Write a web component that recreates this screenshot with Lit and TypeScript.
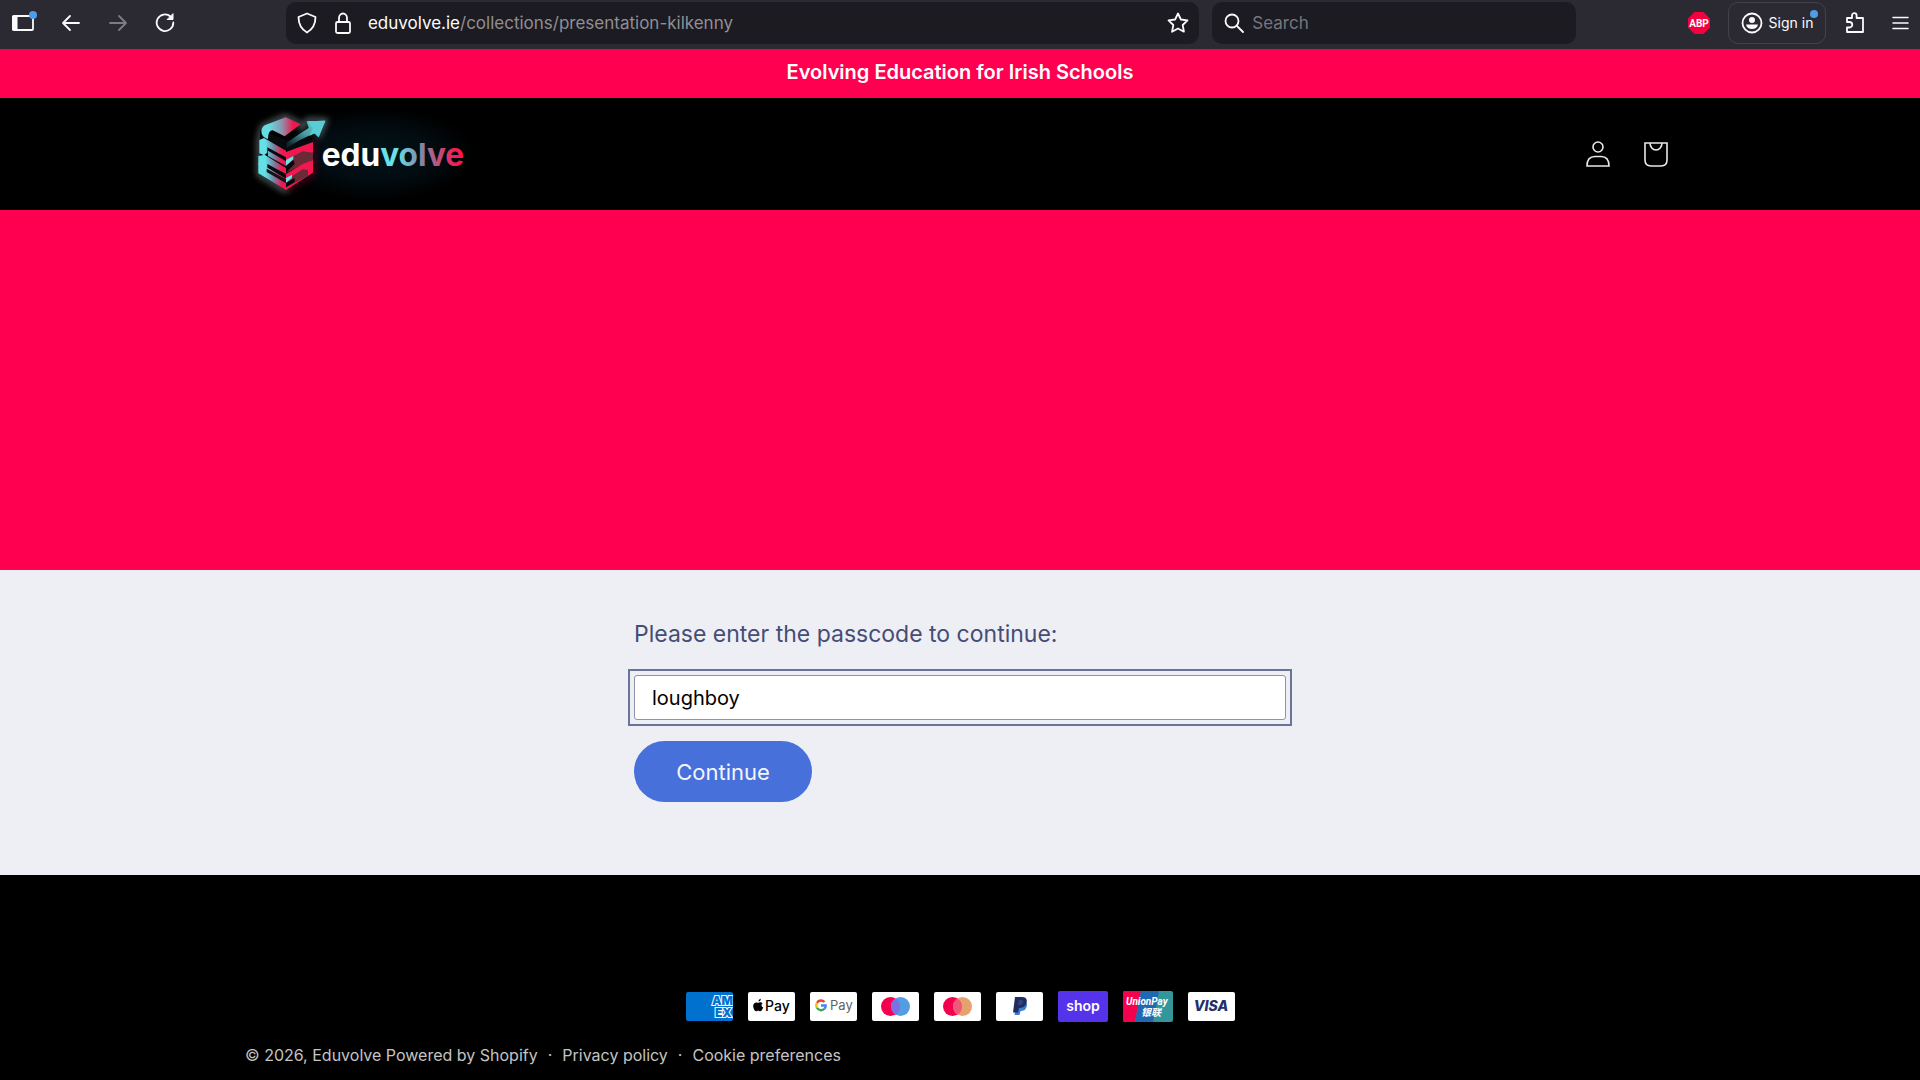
import { LitElement, html, svg, css } from "lit";
import { customElement, state } from "lit/decorators.js";

@customElement("browser-toolbar")
class BrowserToolbar extends LitElement {
  static styles = css`
    :host {
      display: block;
      background: #2b2a33;
      color: #fbfbfe;
      font-family: Inter, "Liberation Sans", sans-serif;
      font-size: 17px;
    }
    .bar {
      display: flex;
      align-items: center;
      height: 45px;
      padding-bottom: 4px;
    }
    button {
      display: flex;
      align-items: center;
      justify-content: center;
      flex: none;
      width: 47px;
      height: 42px;
      padding: 0;
      border: 0;
      background: none;
      color: inherit;
      font: inherit;
    }
    .muted {
      color: #7d7c83;
    }
    svg {
      display: block;
      flex: none;
      fill: none;
      stroke: currentColor;
      stroke-width: 1.8;
      stroke-linecap: round;
      stroke-linejoin: round;
    }
    .spring {
      flex: 1 1 98px;
    }
    .field {
      display: flex;
      align-items: center;
      box-sizing: border-box;
      height: 42px;
      border-radius: 10px;
      background: #1c1b22;
    }
    .address {
      flex: 10 1 914px;
      gap: 14px;
      padding: 0 10px;
    }
    .search {
      flex: 4 1 364px;
      gap: 8px;
      margin-left: 13px;
      padding: 0 12px;
    }
    .url {
      flex: 1;
      min-width: 0;
      color: #8f8f94;
      white-space: nowrap;
    }
    .host {
      color: #fbfbfe;
    }
    input {
      flex: 1;
      min-width: 0;
      padding: 0;
      border: 0;
      outline: 0;
      background: none;
      color: #fbfbfe;
      font: inherit;
    }
    input::placeholder {
      color: #77767c;
      opacity: 1;
    }
    .mini {
      width: 22px;
    }
    .left {
      display: flex;
      flex: none;
      width: 188px;
    }
    .signin {
      width: 98px;
      gap: 6px;
      box-sizing: border-box;
      border: 1px solid #43424b;
      border-radius: 10px;
      margin: 0 4px;
      position: relative;
      font-size: 14px;
    }
    .dot {
      position: absolute;
      top: 7px;
      right: 7px;
      width: 8px;
      height: 8px;
      border-radius: 50%;
      background: #4f9de8;
    }
    .wide {
      width: 50px;
    }
    .menu {
      width: 40px;
    }
  `;

  render() {
    return html`
      <header class="bar">
        <nav class="left" aria-label="Navigation">
          <button aria-label="Sidebar">
            <svg width="26" height="24" viewBox="0 0 26 24">
              <rect x="2" y="5" width="20" height="14" rx="1" />
              <path d="M2 5h4v14H2z" fill="currentColor" stroke-width="1" />
              <circle cx="22" cy="4" r="4" fill="#4f9de8" stroke="none" />
            </svg>
          </button>
          <button aria-label="Back">
            <svg width="20" height="18" viewBox="0 0 20 18"><path d="M18 9H2M9 2 2 9l7 7" /></svg>
          </button>
          <button class="muted" aria-label="Forward">
            <svg width="20" height="18" viewBox="0 0 20 18"><path d="M2 9h16M11 2l7 7-7 7" /></svg>
          </button>
          <button aria-label="Reload">
            <svg width="20" height="20" viewBox="0 0 20 20">
              <path d="M15.500 3.500A8.300 8.300 0 1 0 18.300 9.500" />
              <path d="M18 1v5.500h-5.500z" fill="currentColor" stroke-width="1" />
            </svg>
          </button>
        </nav>
        <span class="spring"></span>
        <div class="field address">
          <button class="mini" aria-label="Tracking protection">
            <svg width="20" height="22" viewBox="0 0 20 22">
              <path d="M10 1.500 18.500 5c0 7-2.500 12-8.500 15.500C4 17 1.500 12 1.500 5z" />
            </svg>
          </button>
          <button class="mini" aria-label="Connection secure">
            <svg width="18" height="22" viewBox="0 0 18 22">
              <rect x="2" y="10" width="14" height="11" rx="1.500" />
              <path d="M5 10V6a4 4.500 0 0 1 8 0v4" />
            </svg>
          </button>
          <span class="url"><span class="host">eduvolve.ie</span>/collections/presentation-kilkenny</span>
          <button class="mini" aria-label="Bookmark this page">
            <svg width="22" height="22" viewBox="0 0 22 22">
              <path d="m11 1.500 2.900 6 6.600.9-4.800 4.600 1.200 6.700-5.900-3.200-5.900 3.200 1.200-6.700L1.500 8.400l6.600-.9z" />
            </svg>
          </button>
        </div>
        <label class="field search">
          <svg width="20" height="20" viewBox="0 0 20 20"><circle cx="8" cy="8" r="6.500" /><path d="m13 13 6 6" /></svg>
          <input type="search" placeholder="Search" aria-label="Search" />
        </label>
        <span class="spring"></span>
        <button class="wide" aria-label="Adblock Plus">
          <svg width="22" height="22" viewBox="0 0 22 22">
            <path d="M6.500 0h9L22 6.500v9L15.500 22h-9L0 15.500v-9z" fill="#f5003f" stroke="none" />
            <text x="11" y="14.500" text-anchor="middle" font-size="10" font-weight="700" font-family="Roboto" fill="#fff" stroke="none">ABP</text>
          </svg>
        </button>
        <button class="signin">
          <svg width="22" height="22" viewBox="0 0 22 22">
            <circle cx="11" cy="11" r="9.500" />
            <circle cx="11" cy="8" r="3" fill="currentColor" stroke="none" />
            <path d="M5 12.500h12c-.5 3-3 4.500-6 4.500s-5.500-1.500-6-4.500z" fill="currentColor" stroke="none" />
          </svg>
          Sign in
          <i class="dot"></i>
        </button>
        <button class="wide" aria-label="Extensions">
          <svg width="20" height="22" viewBox="0 0 20 22">
            <path d="M2 20v-4.500h2.500a2.500 2.500 0 0 0 0-5.500H2V6h5V3.500a2.300 2.300 0 0 1 4.600 0V6H18v14z" />
          </svg>
        </button>
        <button class="menu" aria-label="Menu">
          <svg width="17" height="14" viewBox="0 0 17 14"><path d="M1 1.500h15M1 7h15M1 12.500h15" stroke-width="1.500" /></svg>
        </button>
      </header>
    `;
  }
}

@customElement("brand-logo")
class BrandLogo extends LitElement {
  static styles = css`
    :host {
      display: block;
    }
    svg {
      display: block;
    }
    text {
      font-family: Inter, "Open Sans", sans-serif;
      font-weight: 700;
      font-size: 95px;
    }
  `;

  render() {
    return html`
      <svg width="230" height="92" viewBox="15 24 690 276" role="img" aria-label="eduvolve">
        <defs>
          <radialGradient id="back">
            <stop offset="0" stop-color="#03141a" />
            <stop offset="0.600" stop-color="#020b10" />
            <stop offset="1" stop-color="#000" />
          </radialGradient>
          <linearGradient id="word" gradientUnits="userSpaceOnUse" x1="430" y1="0" x2="678" y2="0">
            <stop offset="0.150" stop-color="#67e3e8" />
            <stop offset="0.450" stop-color="#8189ab" />
            <stop offset="0.650" stop-color="#b8557b" />
            <stop offset="0.900" stop-color="#ff1551" />
          </linearGradient>
          <linearGradient id="cover" gradientUnits="userSpaceOnUse" x1="70" y1="0" x2="182" y2="0">
            <stop offset="0.150" stop-color="#67dbe2" />
            <stop offset="0.500" stop-color="#8b93ac" />
            <stop offset="0.800" stop-color="#f0184f" />
          </linearGradient>
          <linearGradient id="left" gradientUnits="userSpaceOnUse" x1="55" y1="0" x2="138" y2="0">
            <stop offset="0.250" stop-color="#64e0e6" />
            <stop offset="0.550" stop-color="#7288a6" />
            <stop offset="0.850" stop-color="#f0184f" />
          </linearGradient>
          <linearGradient id="arrow" x1="0" y1="1" x2="1" y2="0">
            <stop offset="0.100" stop-color="#10262c" />
            <stop offset="0.500" stop-color="#4b9da6" />
            <stop offset="1" stop-color="#69e4ea" />
          </linearGradient>
          <filter id="glow" x="-30%" y="-30%" width="160%" height="160%"><feGaussianBlur stdDeviation="9" /></filter>
        </defs>
        <rect x="100" y="24" width="605" height="276" fill="url(#back)" />
        <g filter="url(#glow)" fill="none" stroke-width="12" opacity="0.650">
          <path d="M138 272 58 224V120l10-40 67-30 45 22" stroke="#9fb6ba" />
          <path d="m180 90 24-30 52 2-22 50" stroke="#8fb0b4" />
          <path d="m138 272 82-48V126" stroke="#7d0a29" />
        </g>
        <path d="M60 90 136 120 216 126v96l-78 46-78-46z" fill="#070b0e" />
        <path d="M74 76 137 52l45 21-48 36-36-18q-14 0-14 26c-22-4-26-30-10-41z" fill="url(#cover)" />
        <g fill="url(#left)">
          <path d="M58 120 72 114 138 152v20L82 142v16l-10 8-14-6z" />
          <path d="m84 152 54 32v14l-54-30z" />
          <path d="M55 168 74 164 138 204v18l-56-30v14l-27-14z" />
          <path d="M55 188 84 204 138 236v34L55 220z" />
        </g>
        <path d="m80 206 58 32v12l-58-34z" fill="#131419" />
        <path d="M138 156 219 126v32l-30 12-51 28z" fill="#f0184f" />
        <path d="m138 180 50-26 31 4v22l-81 38z" fill="#6b2b36" />
        <path d="m138 180 22-12v10l-22 20z" fill="#69e4ea" />
        <path d="m138 198 22-18 4 12-26 26z" fill="#08090c" />
        <path d="m138 222 50-30 31-12v38l-81 52z" fill="#f0184f" />
        <path d="m138 240 50-32 16 2v18l-66 34z" fill="#6b2b36" />
        <path d="m138 234 18-10v10l-18 14z" fill="#69e4ea" />
        <path d="m138 250 26-16v12l-26 16z" fill="#08090c" />
        <path d="m140 128 38-26 28-18-6-20 56-2-20 50-14-12-46 22-36 22z" fill="url(#arrow)" />
        <path d="m204 64 52-2-20 50-12-12-16 8 10-22z" fill="#59cdd5" />
        <text x="245" y="197" fill="#fff">edu<tspan fill="url(#word)">volve</tspan></text>
      </svg>
    `;
  }
}

const cards = [
  {
    name: "American Express",
    art: svg`<rect width="47" height="29" rx="2" fill="#0071ce" />
      <g fill="#0071ce" stroke="#fff" stroke-width="2" paint-order="stroke" font-size="12" font-weight="900">
        <text x="26" y="13">AM</text><text x="29" y="25">EX</text></g>`,
  },
  {
    name: "Apple Pay",
    art: svg`<rect width="47" height="29" rx="2" fill="#fff" />
      <path d="M10.500 9.500c0-1.500 1-2.500 2.300-2.800.1 1.600-.9 2.700-2.300 2.800zM14.600 11.200c-1.600 1.100-1.400 3.500.6 4.400-.8 2.200-1.900 3.700-3 3.700-.8 0-1.100-.5-2-.5s-1.200.5-2 .5c-1.500 0-3-3-3-5.200 0-2.800 2.400-4.300 4.700-3.200 1.500-.7 3.500-.9 4.700.3z" />
      <text x="17" y="19" font-size="14" font-weight="500">Pay</text>`,
  },
  {
    name: "Google Pay",
    art: svg`<rect width="47" height="29" rx="2" fill="#fff" />
      <g fill="none" stroke-width="2.300">
        <path d="M14.500 10A4.700 4.700 0 0 0 7 10.800" stroke="#ea4335" />
        <path d="M7 10.800a4.700 4.700 0 0 0 0 5" stroke="#fbbc04" />
        <path d="M7 15.800a4.700 4.700 0 0 0 7.500 1" stroke="#34a853" />
        <path d="M14.500 16.800a4.700 4.700 0 0 0 1.200-3.300H11" stroke="#4285f4" />
      </g>
      <text x="20" y="18" font-size="13" fill="#5f6368">Pay</text>`,
  },
  {
    name: "Maestro",
    art: svg`<rect width="47" height="29" rx="2" fill="#fff" />
      <circle cx="18.500" cy="14.500" r="9.500" fill="#f5004f" /><circle cx="28.500" cy="14.500" r="9.500" fill="#539de2" />
      <path d="M23.500 6.400a9.500 9.500 0 0 1 0 16.200 9.500 9.500 0 0 1 0-16.200z" fill="#7d70e2" />`,
  },
  {
    name: "Mastercard",
    art: svg`<rect width="47" height="29" rx="2" fill="#fff" />
      <circle cx="18.500" cy="14.500" r="9.500" fill="#f5004f" /><circle cx="28.500" cy="14.500" r="9.500" fill="#e5a16e" />
      <path d="M23.500 6.400a9.500 9.500 0 0 1 0 16.200 9.500 9.500 0 0 1 0-16.200z" fill="#f0577a" />`,
  },
  {
    name: "PayPal",
    art: svg`<rect width="47" height="29" rx="2" fill="#fff" />
      <path d="M21 9h7c3 1 3.500 3 2.500 6s-3 4-6 4l-1 4h-5z" fill="#3b7bd0" />
      <path d="M19 5h7c4 0 5.500 2.500 4.500 6s-3.500 5-7.500 5l-1 4.500h-5z" fill="#1f2d62" />
      <path d="m23 8-1 5c3 0 4.500-.5 5-2.500S26 8 23 8z" fill="#34457e" />`,
  },
  {
    name: "Shop Pay",
    large: true,
    art: svg`<rect width="50" height="31" rx="2" fill="#5433eb" />
      <text x="25" y="20" text-anchor="middle" font-size="14" font-weight="600" fill="#fff">shop</text>`,
  },
  {
    name: "Union Pay",
    large: true,
    art: svg`<rect width="50" height="31" rx="2" fill="#32969b" />
      <path d="M2 0h16l-6 31H2a2 2 0 0 1-2-2V2a2 2 0 0 1 2-2z" fill="#f5004f" />
      <path d="M18 0h18l-6 31H12z" fill="#2068b2" />
      <g fill="#fff" font-style="italic" font-weight="700">
        <text x="3" y="14" font-size="10" font-family="Roboto">UnionPay</text>
        <text x="18" y="25" font-size="10" font-family="Noto Sans CJK SC">银联</text></g>`,
  },
  {
    name: "Visa",
    art: svg`<rect width="47" height="29" rx="2" fill="#fff" />
      <text x="23" y="19" text-anchor="middle" font-size="14" font-weight="800" font-style="italic" fill="#22306b">VISA</text>`,
  },
];

@customElement("app-root")
class AppRoot extends LitElement {
  static styles = css`
    :host {
      display: flex;
      flex-direction: column;
      min-height: 100vh;
      background: #000;
      font-family: Inter, "Liberation Sans", sans-serif;
    }
    .announcement {
      margin: 0;
      padding-bottom: 2px;
      background: #ff0050;
      color: #fff;
      font-size: 20px;
      font-weight: 600;
      line-height: 47px;
      text-align: center;
    }
    .container {
      width: 100%;
      max-width: 1430px;
      margin: 0 auto;
      box-sizing: border-box;
    }
    .header {
      display: flex;
      align-items: center;
      justify-content: space-between;
      padding: 10px 6px 10px 0;
    }
    .actions {
      display: flex;
      gap: 32px;
    }
    .actions a {
      color: #e8e8e8;
    }
    .actions svg {
      display: block;
      fill: none;
      stroke: currentColor;
      stroke-width: 1.600;
    }
    .banner {
      height: 360px;
      background: #ff0050;
    }
    .gate {
      padding: 48px 24px 73px;
      background: #eeeff5;
    }
    form {
      display: flex;
      flex-direction: column;
      align-items: flex-start;
      max-width: 652px;
      margin: 0 auto;
    }
    label {
      margin-bottom: 25px;
      color: #454d76;
      font-size: 23px;
      line-height: 32px;
    }
    .ring {
      display: flex;
      width: 100%;
      margin-bottom: 21px;
      outline: 2px solid #6b7397;
      outline-offset: 4px;
    }
    .passcode {
      flex: 1;
      min-width: 0;
      height: 45px;
      box-sizing: border-box;
      padding: 0 17px;
      border: 1px solid #8f94ab;
      border-radius: 3px;
      outline: 0;
      background: #fff;
      color: #000;
      font-family: Inter, "Liberation Sans", sans-serif;
      font-size: 20px;
    }
    .submit {
      min-width: 178px;
      height: 61px;
      padding: 0 32px;
      border: 0;
      border-radius: 31px;
      background: #4770db;
      color: #f3f5fd;
      font-family: inherit;
      font-size: 22px;
    }
    .footer {
      flex: 1;
      padding-top: 116px;
      color: #c4c4c4;
      font-size: 16px;
      line-height: 20px;
    }
    .payments {
      display: flex;
      flex-wrap: wrap;
      align-items: center;
      justify-content: center;
      gap: 15px;
      margin: 0 0 23px;
      padding: 0;
      list-style: none;
    }
    .payments svg {
      display: block;
      font-family: Inter, "Liberation Sans", sans-serif;
    }
    .legal {
      display: flex;
      flex-wrap: wrap;
      gap: 10px;
    }
    .legal a {
      color: inherit;
      text-decoration: none;
    }
  `;

  @state() private passcode = "loughboy";

  private onInput(e: Event) {
    this.passcode = (e.target as HTMLInputElement).value;
  }

  render() {
    return html`
      <browser-toolbar></browser-toolbar>
      <p class="announcement">Evolving Education for Irish Schools</p>
      <header class="container header">
        <a href="#home" aria-label="Eduvolve home"><brand-logo></brand-logo></a>
        <nav class="actions" aria-label="Account and cart">
          <a href="#account" aria-label="Log in">
            <svg width="26" height="28" viewBox="0 0 26 28">
              <circle cx="13" cy="7" r="5" />
              <path d="M2 26c0-6 3-9.500 8-9.500h6c5 0 8 3.500 8 9.500z" />
            </svg>
          </a>
          <a href="#cart" aria-label="Cart">
            <svg width="26" height="28" viewBox="0 0 26 28">
              <path d="M2 3h22v17q0 6-6 6H8q-6 0-6-6z" />
              <path d="M7 3a6 7 0 0 0 12 0" />
            </svg>
          </a>
        </nav>
      </header>
      <section class="banner"></section>
      <main class="gate">
        <form @submit=${(e: Event) => e.preventDefault()}>
          <label for="passcode">Please enter the passcode to continue:</label>
          <div class="ring">
            <input class="passcode" id="passcode" type="text" .value=${this.passcode} @input=${this.onInput} />
          </div>
          <button class="submit" type="submit">Continue</button>
        </form>
      </main>
      <footer class="footer">
        <ul class="payments">
          ${cards.map((card) => {
            const w = card.large ? 50 : 47;
            const h = card.large ? 31 : 29;
            return html`<li>
              <svg width=${w} height=${h} viewBox="0 0 ${w} ${h}" role="img" aria-label=${card.name}>${card.art}</svg>
            </li>`;
          })}
        </ul>
        <div class="container legal">
          <span>© 2026, <a href="#home">Eduvolve</a> <a href="#shopify">Powered by Shopify</a></span>
          <span>·</span>
          <a href="#privacy">Privacy policy</a>
          <span>·</span>
          <a href="#cookies">Cookie preferences</a>
        </div>
      </footer>
    `;
  }
}
